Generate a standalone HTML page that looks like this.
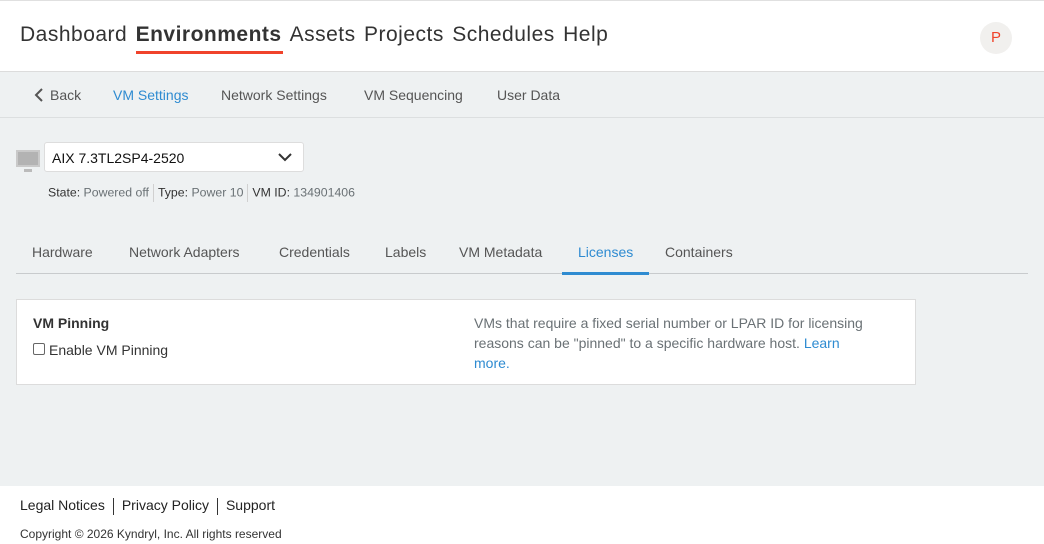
<!DOCTYPE html>
<html><head><meta charset="utf-8"><style>
*{margin:0;padding:0;box-sizing:border-box}
body{width:1044px;height:544px;font-family:"Liberation Sans",sans-serif;background:#eef1f2;position:relative;overflow:hidden;color:#3d3d3d}
.hdr{position:absolute;left:0;top:0;width:1044px;height:72px;background:#fff;border-top:1px solid #e0e0e0;border-bottom:1px solid #dcdcdc}
.nav{position:absolute;left:20px;top:22px;font-size:21px;letter-spacing:0.5px;color:#333;white-space:nowrap}
.nav span{margin-right:2px}
.nav b{position:relative;font-weight:bold;margin-right:8px}
.nav b:after{content:"";position:absolute;left:0;right:-1px;bottom:-8px;height:3px;background:#f0432b}
.av{position:absolute;left:980px;top:21px;width:32px;height:32px;border-radius:50%;background:#f1f0ee;color:#f0432b;font-size:15px;text-align:center;line-height:32px}
.sub{position:absolute;top:72px;left:0;width:1044px;height:46px;border-bottom:1px solid #dcdfe0;font-size:14px;color:#555}
.sub span{position:absolute;top:15px}
.a{color:#2e8bd1}
.ic{position:absolute;left:16px;top:150px;width:24px;height:17px;background:#b3b3b3;border:2px solid #c9c9c9}
.ic:after{content:"";position:absolute;left:6px;top:17px;width:8px;height:3px;background:#bbb}
.sel{position:absolute;left:44px;top:142px;width:260px;height:30px;background:#fff;border:1px solid #ddd;border-radius:3px;font-size:14px;color:#111;padding:7px 0 0 7px}
.meta{position:absolute;left:48px;top:184px;font-size:12.3px;color:#333;white-space:nowrap}
.meta i{font-style:normal;color:#6a7175}
.meta .sep{display:inline-block;width:1px;height:18px;background:#d0d0d0;vertical-align:middle;margin:0 4px}
.tabs{position:absolute;left:16px;top:233px;width:1012px;height:41px;border-bottom:1px solid #c8cbcd;font-size:14px;color:#555}
.tabs span{position:absolute;top:11px}
.tabs .on{color:#2e8bd1}
.tabs .on:after{content:"";position:absolute;left:-16px;right:-16px;top:28px;height:3px;background:#2e8bd1}
.card{position:absolute;left:16px;top:299px;width:900px;height:86px;background:#fff;border:1px solid #dcdcdc}
.t1{position:absolute;left:16px;top:15px;font-size:14px;font-weight:bold;color:#333}
.cb{position:absolute;left:16px;top:43px;width:12px;height:12px;border:1px solid #666;border-radius:2px}
.t2{position:absolute;left:32px;top:42px;font-size:14px;color:#333}
.desc{position:absolute;left:457px;top:13px;width:410px;font-size:14px;line-height:20px;color:#6a7175}
.ft{position:absolute;left:0;top:486px;width:1044px;height:58px;background:#fff}
.fl{position:absolute;left:20px;top:11px;font-size:14px;color:#222}
.fl .s{display:inline-block;width:1px;height:17px;background:#333;vertical-align:middle;margin:0 8px}
.cp{position:absolute;left:20px;top:41px;font-size:12px;color:#333}
</style></head><body>
<div class="hdr"><div class="nav"><span>Dashboard</span> <b>Environments</b><span>Assets</span> <span>Projects</span> <span>Schedules</span> <span>Help</span></div><div class="av">P</div></div>
<div class="sub"><span style="left:34px"><svg width="10" height="14" viewBox="0 0 10 14" style="vertical-align:-2px;margin-right:6px"><path d="M8 1L2 7l6 6" stroke="#555" stroke-width="2" fill="none"/></svg>Back</span><span class="a" style="left:113px">VM Settings</span><span style="left:221px">Network Settings</span><span style="left:364px">VM Sequencing</span><span style="left:497px">User Data</span></div>
<div class="ic"></div>
<div class="sel">AIX 7.3TL2SP4-2520<svg width="14" height="9" viewBox="0 0 14 9" style="position:absolute;left:233px;top:10px"><path d="M1 1l6 6 6-6" stroke="#333" stroke-width="2" fill="none"/></svg></div>
<div class="meta">State: <i>Powered off</i><span class="sep"></span>Type: <i>Power 10</i><span class="sep"></span>VM ID: <i>134901406</i></div>
<div class="tabs"><span style="left:16px">Hardware</span><span style="left:113px">Network Adapters</span><span style="left:263px">Credentials</span><span style="left:369px">Labels</span><span style="left:443px">VM Metadata</span><span class="on" style="left:562px">Licenses</span><span style="left:649px">Containers</span></div>
<div class="card"><div class="t1">VM Pinning</div><div class="cb"></div><div class="t2">Enable VM Pinning</div><div class="desc">VMs that require a fixed serial number or LPAR ID for licensing reasons can be "pinned" to a specific hardware host. <span class="a">Learn<br>more.</span></div></div>
<div class="ft"><div class="fl">Legal Notices<span class="s"></span>Privacy Policy<span class="s"></span>Support</div><div class="cp">Copyright © 2026 Kyndryl, Inc. All rights reserved</div></div>
</body></html>
